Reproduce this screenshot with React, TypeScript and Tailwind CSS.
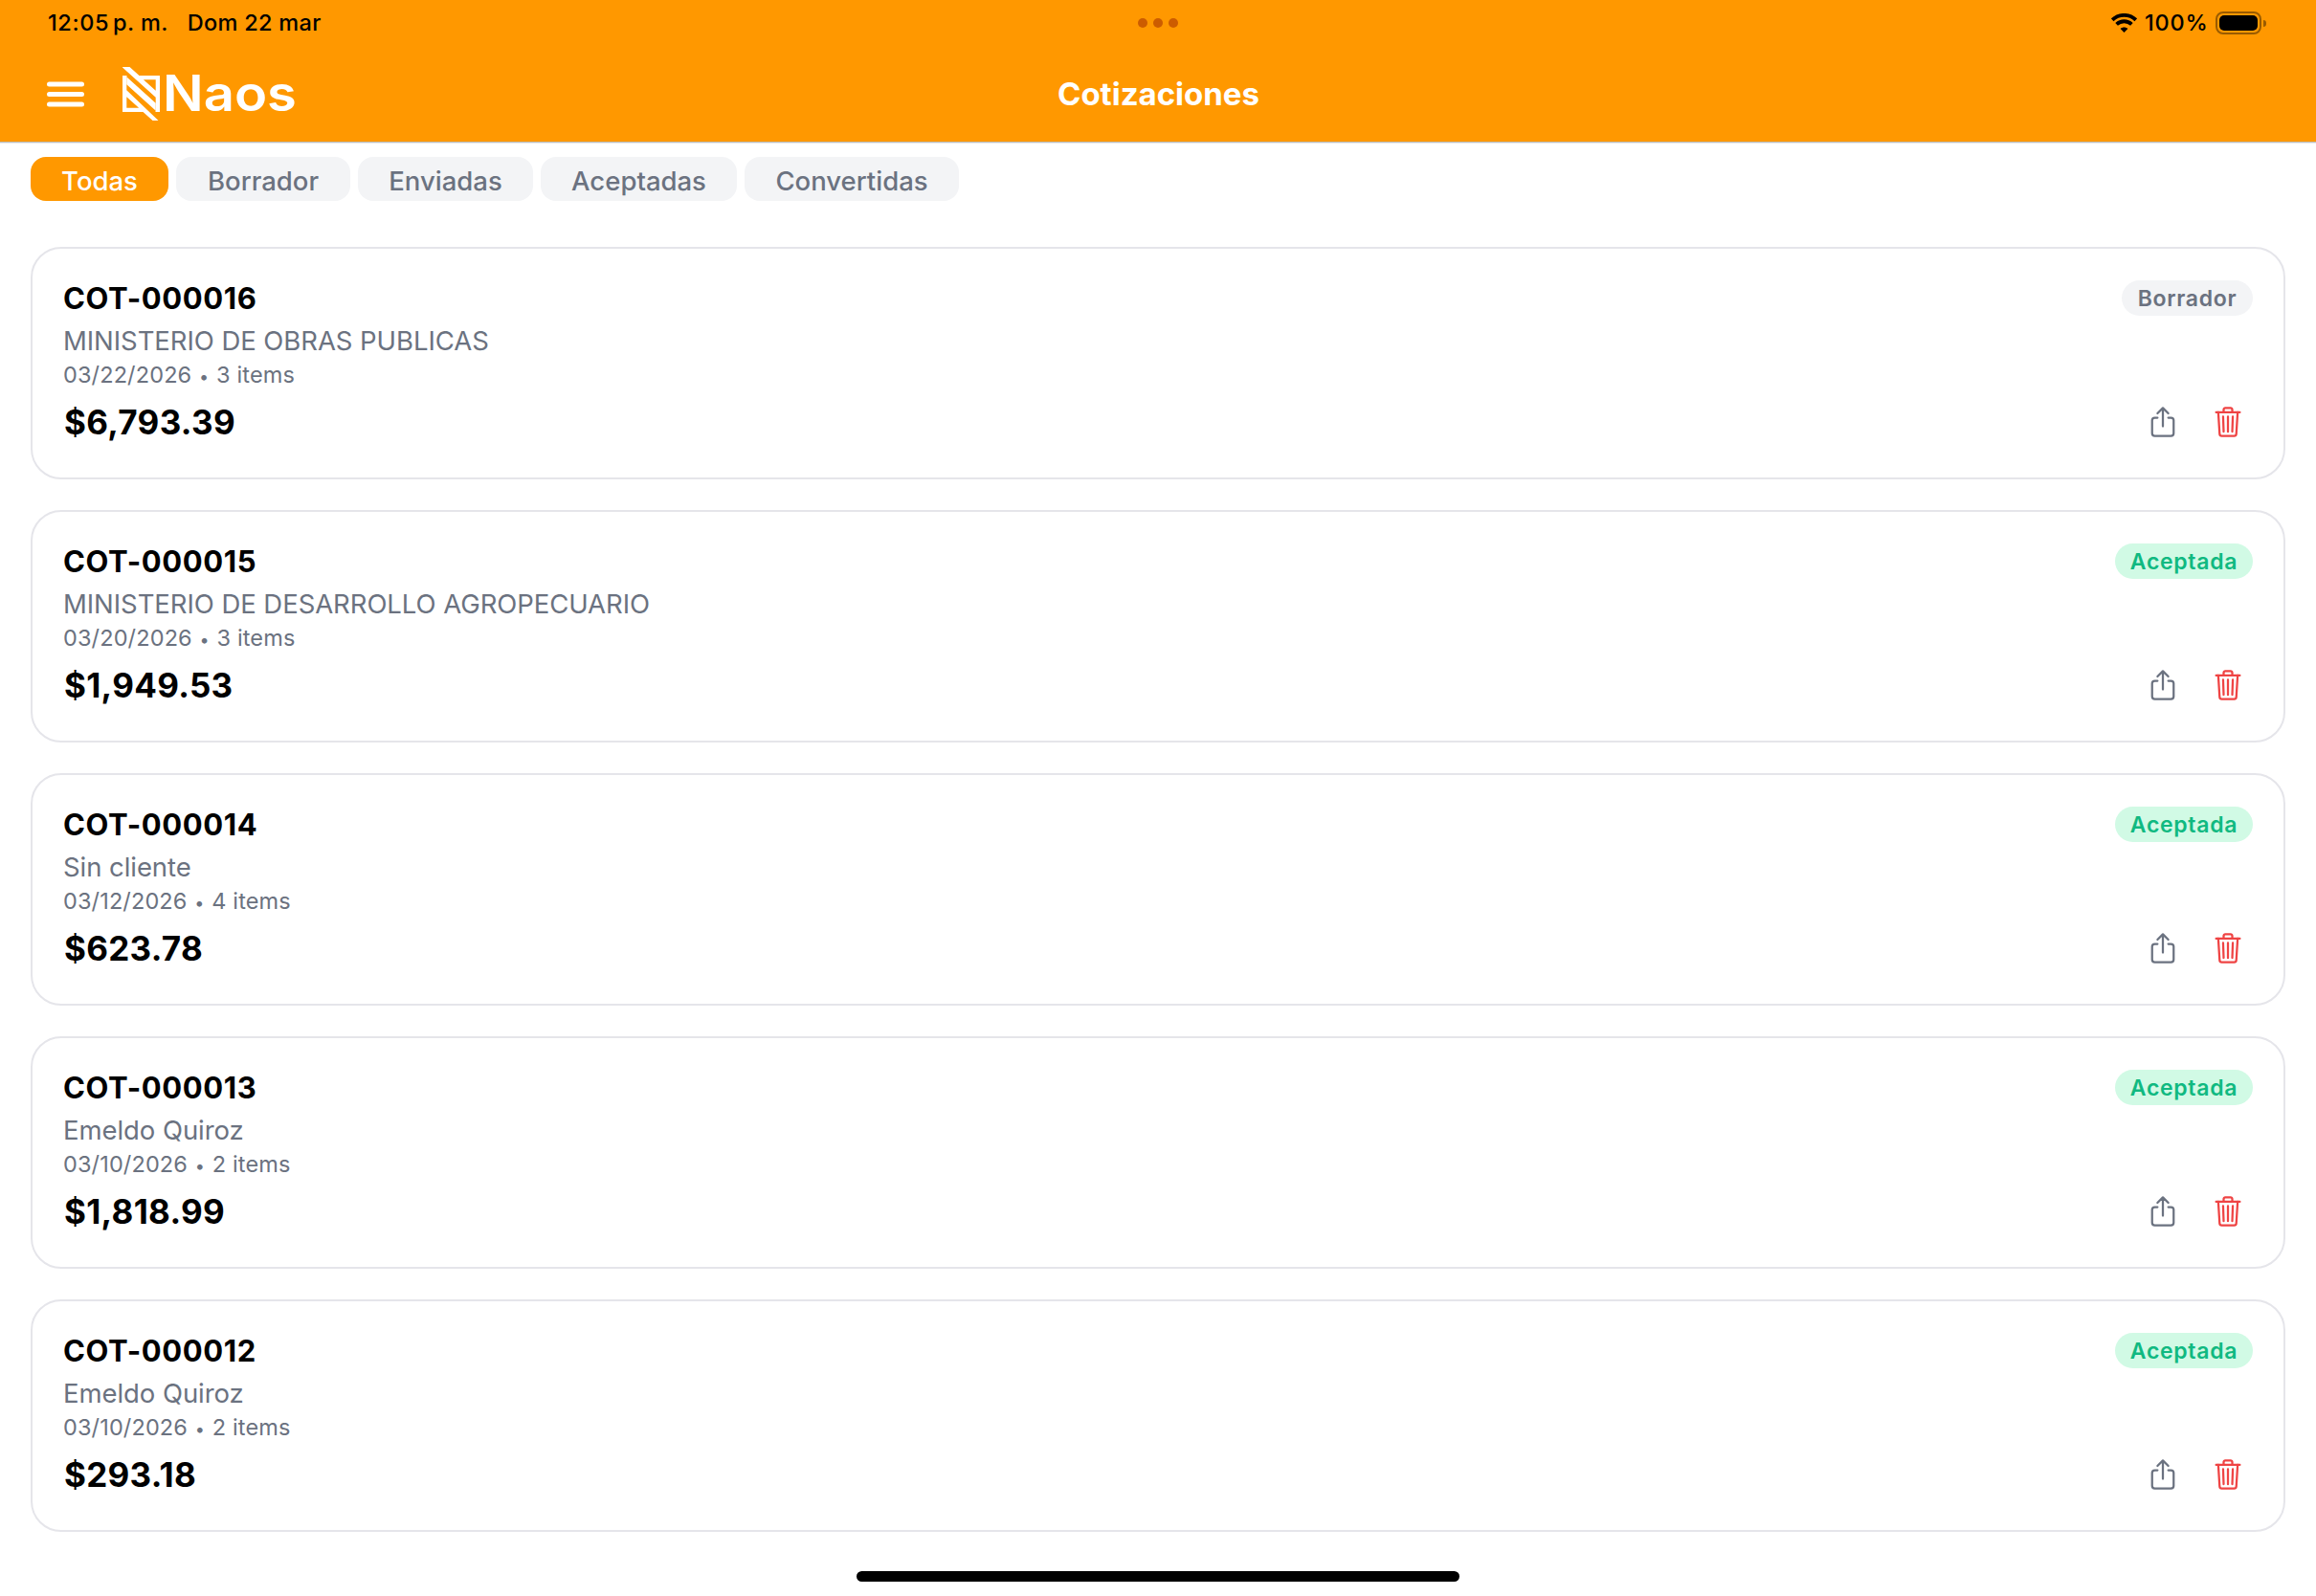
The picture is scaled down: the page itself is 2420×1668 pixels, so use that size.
import { IoShareOutline, IoTrashOutline } from 'react-icons/io5';

type Status = 'Borrador' | 'Aceptada';

const tabs = [
  { label: 'Todas', box: 'w-[144px] bg-[#ff9800] text-white' },
  { label: 'Borrador', box: 'w-[182px] bg-gray-100 text-[#6b7280]' },
  { label: 'Enviadas', box: 'w-[183px] bg-gray-100 text-[#6b7280]' },
  { label: 'Aceptadas', box: 'w-[205px] bg-gray-100 text-[#6b7280]' },
  { label: 'Convertidas', box: 'w-[224px] bg-gray-100 text-[#6b7280]' },
];

const quotes: { id: string; client: string; date: string; items: number; total: string; status: Status }[] = [
  { id: 'COT-000016', client: 'MINISTERIO DE OBRAS PUBLICAS', date: '03/22/2026', items: 3, total: '$6,793.39', status: 'Borrador' },
  { id: 'COT-000015', client: 'MINISTERIO DE DESARROLLO AGROPECUARIO', date: '03/20/2026', items: 3, total: '$1,949.53', status: 'Aceptada' },
  { id: 'COT-000014', client: 'Sin cliente', date: '03/12/2026', items: 4, total: '$623.78', status: 'Aceptada' },
  { id: 'COT-000013', client: 'Emeldo Quiroz', date: '03/10/2026', items: 2, total: '$1,818.99', status: 'Aceptada' },
  { id: 'COT-000012', client: 'Emeldo Quiroz', date: '03/10/2026', items: 2, total: '$293.18', status: 'Aceptada' },
];

const badgeStyles: Record<Status, string> = {
  Borrador: 'w-[137px] bg-gray-100 text-[#6b7280]',
  Aceptada: 'w-[144px] bg-[#d1fae5] text-[#10b981]',
};

function StatusBar() {
  return (
    <div className="grid h-12 grid-cols-3 items-center text-[23.5px] leading-none font-medium text-black">
      <div className="flex pl-[50px] tracking-[0.4px]">
        <span className="tracking-[0.6px]">12:05</span>
        <span className="ml-1">p. m.</span>
        <span className="ml-5 tracking-[0.3px]">Dom 22 mar</span>
      </div>
      <div className="flex justify-center gap-1.5">
        <span className="size-2.5 rounded-full bg-[#cc5c00]" />
        <span className="size-2.5 rounded-full bg-[#cc5c00]" />
        <span className="size-2.5 rounded-full bg-[#cc5c00]" />
      </div>
      <div className="flex items-center justify-end pr-[52px]">
        <svg className="h-5 w-[27px]" viewBox="0 0 27 20" fill="none" stroke="black" strokeWidth="3.8">
          <path d="M1.2 6.8C8 .2 19 .2 25.8 6.8" />
          <path d="M5.6 11.4c4.5-4.2 11.3-4.2 15.8 0" />
          <path d="M13.5 20l-3.9-4c2.2-2 5.6-2 7.8 0z" fill="black" stroke="none" />
        </svg>
        <span className="ml-[8px] w-[67px] tracking-[0.8px]">100%</span>
        <div className="ml-[7px] h-6 w-12 rounded-[8px] border-2 border-black/40 p-0.5">
          <div className="h-full rounded-[5px] bg-black" />
        </div>
        <div className="ml-0.5 h-[7px] w-[3px] rounded-r-full bg-black/40" />
      </div>
    </div>
  );
}

function Logo() {
  return (
    <div className="flex items-center text-white">
      <svg className="h-14 w-[39px]" viewBox="0 0 39 56" fill="currentColor">
        {/* upper half: slanted bar joined to the top and right edges */}
        <path d="M0 0h7.5l10 9H39v38h-4.3V31.7L0 .45z M21.9 13.2L34.7 24.7V13.2z" fillRule="evenodd" />
        {/* centre bar */}
        <path d="M2.8 9L34.7 37.7V47h1.5L4.3 18.3V9z" />
        {/* lower half, the upper one turned by 180 degrees */}
        <path d="M39 56h-7.5l-10-9H0V9h4.3v15.3L37.5 56z M17.1 42.8L4.3 31.3v11.5z" fillRule="evenodd" />
      </svg>
      <span className="ml-[3px] origin-left scale-x-[1.08] text-[52px] leading-none font-semibold">Naos</span>
    </div>
  );
}

function Header() {
  return (
    <header className="h-[150px] border-b border-[#e8e8e8] bg-[#ff9800]">
      <div className="h-[149px] border-b border-[#bcbcbc]">
        <StatusBar />
        <div className="grid h-[100px] grid-cols-3 items-center">
          <div className="flex items-center pl-[49px]">
            <svg className="h-[27px] w-[39px]" viewBox="0 0 39 27" stroke="white" strokeWidth="5" strokeLinecap="round">
              <path d="M2.5 3h34M2.5 13.5h34M2.5 24h34" />
            </svg>
            <div className="ml-10">
              <Logo />
            </div>
          </div>
          <h1 className="pl-px text-center text-[33px] leading-none font-[650] text-white">Cotizaciones</h1>
          <div />
        </div>
      </div>
    </header>
  );
}

export default function App() {
  return (
    <div className="flex h-[1668px] w-[2420px] flex-col overflow-hidden bg-white font-['Inter',sans-serif]">
      <Header />
      <nav className="mt-[14px] flex gap-2 px-8">
        {tabs.map((t) => (
          <div key={t.label} className={`h-[46px] rounded-2xl pt-[7px] text-center text-[27.5px] leading-9 font-medium ${t.box}`}>
            {t.label}
          </div>
        ))}
      </nav>
      <main className="mt-12 flex flex-col gap-8 px-8">
        {quotes.map((q) => (
          <article key={q.id} className="h-[243px] rounded-[32px] border-2 border-[#e5e5ea] p-8 whitespace-nowrap">
            <div className="flex h-[39px] items-center justify-between">
              <h2 className="text-[31px] leading-none font-bold tracking-[0.6px] text-black">{q.id}</h2>
              <span
                className={`flex h-[37px] items-center justify-center rounded-full pt-0.5 text-[23px] leading-none font-semibold tracking-[0.7px] ${badgeStyles[q.status]}`}
              >
                {q.status}
              </span>
            </div>
            <p className="mt-[7px] h-9 text-[27.5px] leading-9 tracking-[-0.06px] text-[#6b7280]">{q.client}</p>
            <p className="h-[35px] text-[23.5px] leading-[35px] tracking-[0.13px] text-[#6b7280]">
              {q.date} <span className="mx-px text-[18px]">•</span> {q.items} items
            </p>
            <div className="mt-[14px] flex h-9 items-center justify-between">
              <strong className="pl-px text-[35px] leading-none font-bold tracking-[0.3px] text-black">{q.total}</strong>
              <div className="flex gap-8 pr-2">
                <IoShareOutline className="size-9 text-[#6b7280]" />
                <IoTrashOutline className="size-9 text-[#ef4444]" />
              </div>
            </div>
          </article>
        ))}
      </main>
      <div className="mx-auto mt-[41px] h-[11px] w-[630px] rounded-full bg-black" />
    </div>
  );
}
